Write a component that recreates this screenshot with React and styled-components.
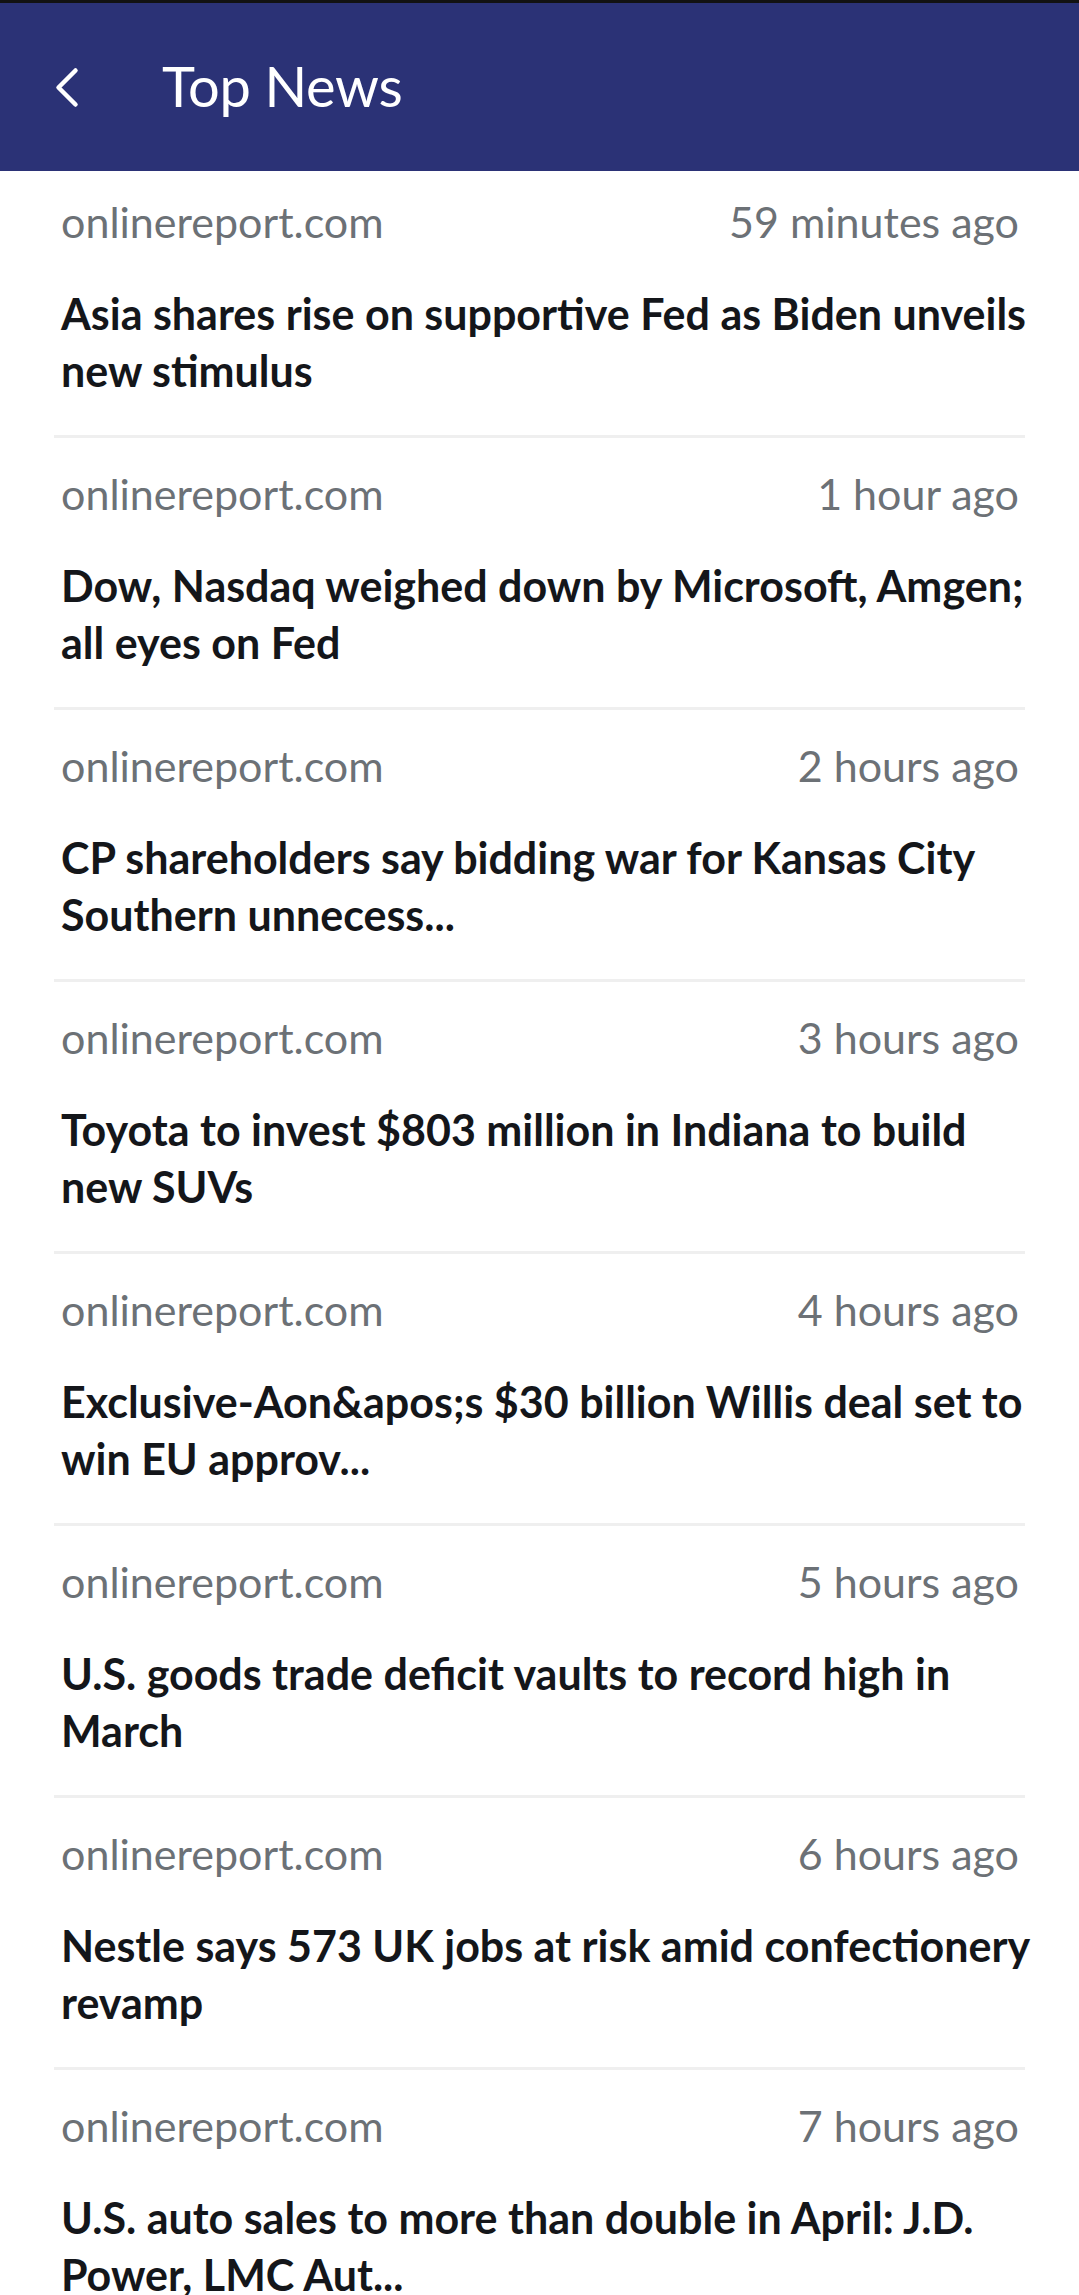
import React from 'react'
import styled, { createGlobalStyle } from 'styled-components'

const GlobalStyle = createGlobalStyle`
  html, body {
    margin: 0;
    padding: 0;
    background: #ffffff;
    font-family: Lato, 'Noto Sans', 'Liberation Sans', sans-serif;
  }
`

const Page = styled.div`
  width: 1079px;
  min-height: 2295px;
  background: #ffffff;
  overflow: hidden;
`

const Header = styled.header`
  height: 168px;
  border-top: 3px solid #121212;
  background: #2b3276;
  display: flex;
  align-items: center;
  padding: 0 0 0 50px;
  gap: 80px;
`

const BackButton = styled.button`
  width: 32px;
  height: 48px;
  padding: 0;
  border: none;
  background: transparent;
  display: flex;
  align-items: center;
  justify-content: center;
`

const Title = styled.h1`
  margin: 0 0 4px;
  color: #ffffff;
  font-size: 56px;
  font-weight: 400;
  letter-spacing: -0.3px;
`

const List = styled.ul`
  list-style: none;
  margin: 0;
  padding: 0;
`

const Item = styled.li`
  margin: 0 54px;
  padding: 31px 6px 36px 7px;
  border-bottom: 3px solid #efefef;
  &:first-child {
    padding-top: 26px;
  }
`

const Meta = styled.div`
  display: flex;
  justify-content: space-between;
  align-items: baseline;
  font-size: 43px;
  line-height: 50px;
  color: #6c7176;
`

const Headline = styled.h2`
  margin: 38px 0 0;
  font-size: 43px;
  line-height: 57px;
  font-weight: 700;
  color: #14161a;
  white-space: nowrap;
`

const news = [
  ['59 minutes ago', ['Asia shares rise on supportive Fed as Biden unveils', 'new stimulus']],
  ['1 hour ago', ['Dow, Nasdaq weighed down by Microsoft, Amgen;', 'all eyes on Fed']],
  ['2 hours ago', ['CP shareholders say bidding war for Kansas City', 'Southern unnecess...']],
  ['3 hours ago', ['Toyota to invest $803 million in Indiana to build', 'new SUVs']],
  ['4 hours ago', ['Exclusive-Aon&apos;s $30 billion Willis deal set to', 'win EU approv...']],
  ['5 hours ago', ['U.S. goods trade deficit vaults to record high in', 'March']],
  ['6 hours ago', ['Nestle says 573 UK jobs at risk amid confectionery', 'revamp']],
  ['7 hours ago', ['U.S. auto sales to more than double in April: J.D.', 'Power, LMC Aut...']],
]

const BackIcon = () => (
  <svg width="32" height="48" viewBox="0 0 32 48" fill="none">
    <path
      d="M25.5 7.5 L8.5 24.5 L25.5 41.5"
      stroke="#ffffff"
      strokeWidth="4.5"
      strokeLinecap="round"
      strokeLinejoin="round"
    />
  </svg>
)

const App = () => (
  <Page>
    <GlobalStyle />
    <Header>
      <BackButton aria-label="Back">
        <BackIcon />
      </BackButton>
      <Title>Top News</Title>
    </Header>
    <List>
      {news.map(([time, lines]) => (
        <Item key={time}>
          <Meta>
            <span>onlinereport.com</span>
            <span>{time}</span>
          </Meta>
          <Headline>
            {lines[0]}
            <br />
            {lines[1]}
          </Headline>
        </Item>
      ))}
    </List>
  </Page>
)

export default App
